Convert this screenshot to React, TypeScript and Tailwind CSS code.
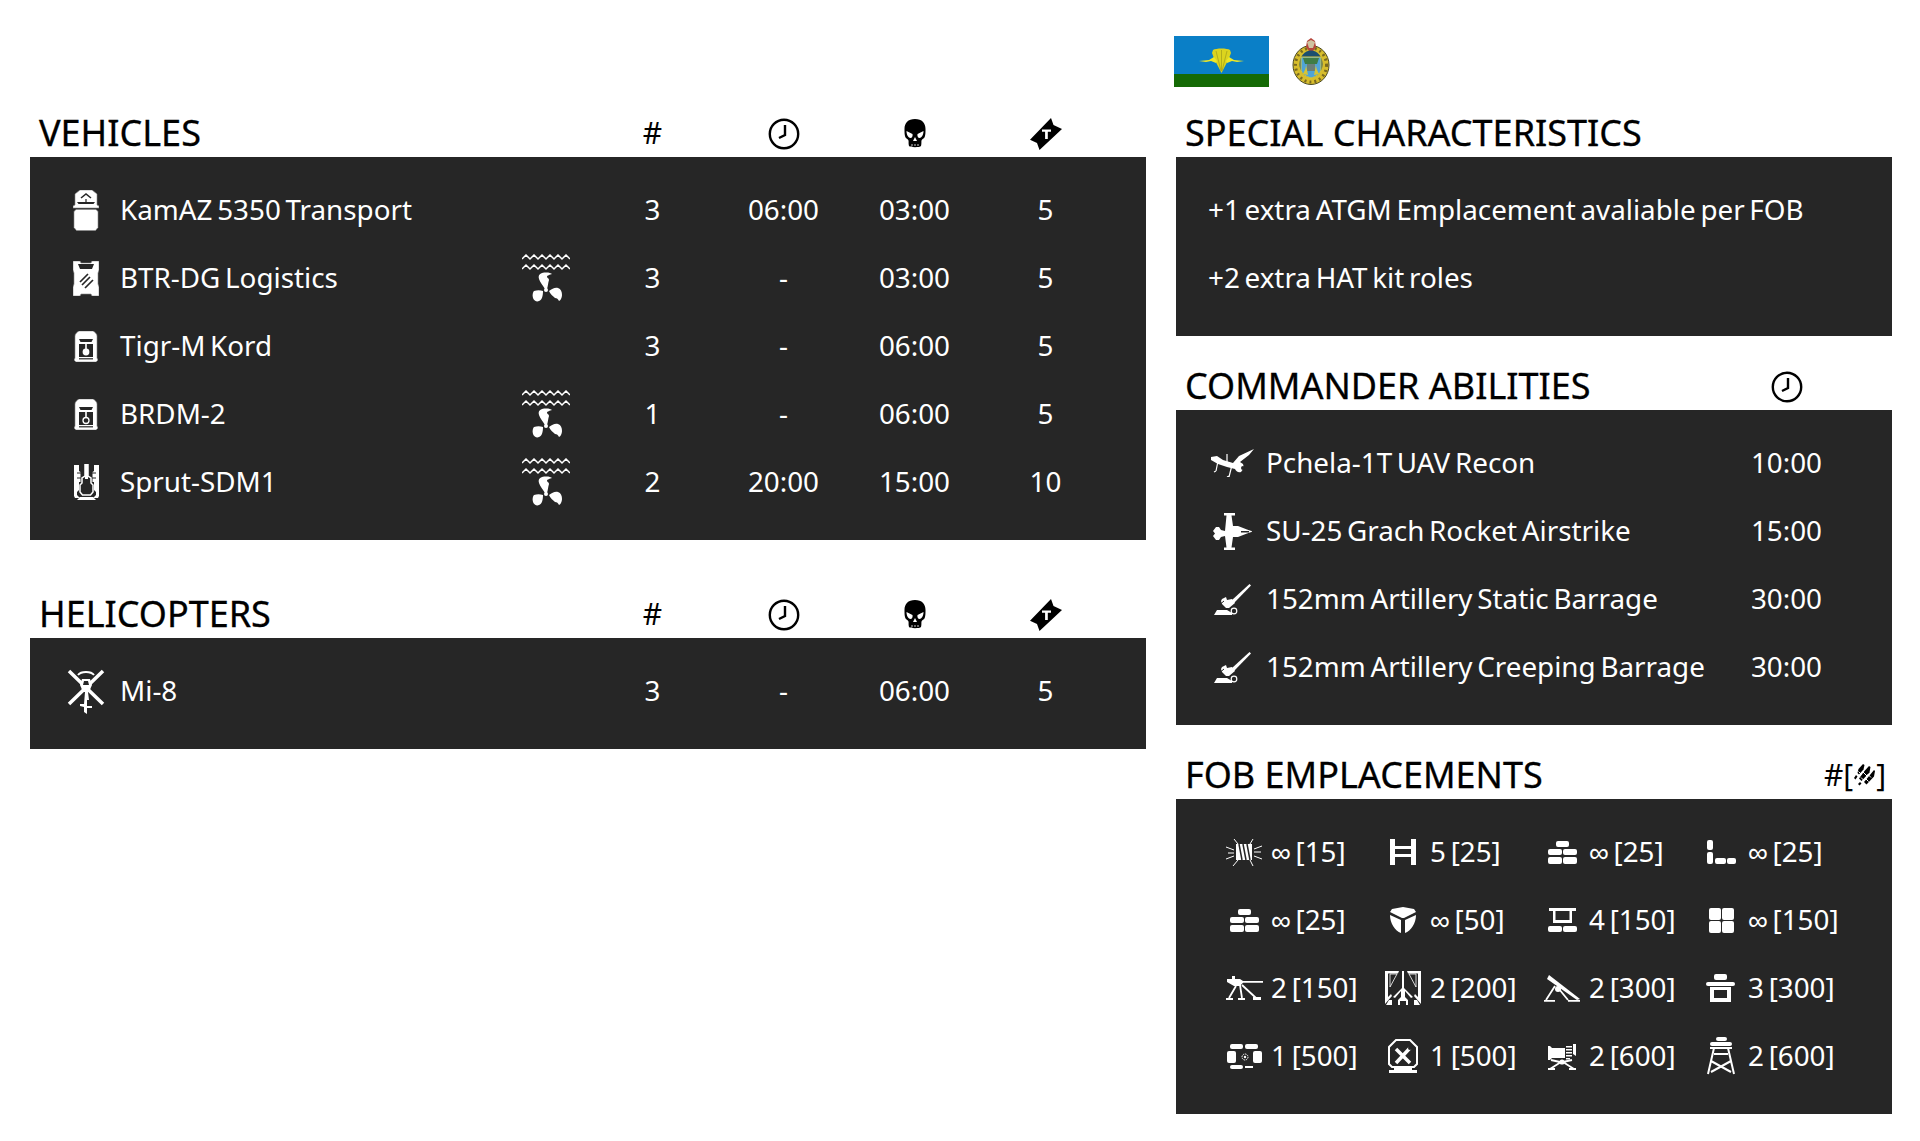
import React from "react";

const D = "#262626";

function Svg({ w, h, children, className = "" }: { w: number; h: number; children: React.ReactNode; className?: string }) {
  return (
    <svg width={w} height={h} viewBox={`0 0 ${w} ${h}`} className={`shrink-0 ${className}`} fill="#fff">
      {children}
    </svg>
  );
}

const Clock = () => (
  <Svg w={32} h={32}>
    <circle cx="16" cy="16" r="14.2" fill="none" stroke="#000" strokeWidth="2.4" />
    <path d="M17 7v10l-6 3" fill="none" stroke="#000" strokeWidth="2.4" />
  </Svg>
);
const Skull = () => (
  <Svg w={22} h={29}>
    <path d="M11 0C4 0 .5 4 .5 10c0 3 0 6 .8 8 .5 1.500 2.700 2 3.200 3.500.3 1-.2 3 .5 5.500 1 1.600 11 1.600 12 0 .7-2.500.2-4.500.5-5.500.5-1.500 2.700-2 3.200-3.500.8-2 .8-5 .8-8C21.500 4 18 0 11 0z" fill="#000" />
    <path d="M2.500 12l6 3c.5 2-.5 4-2 4-2 0-4-3-4-7zM19.500 12l-6 3c-.5 2 .5 4 2 4 2 0 4-3 4-7zM11 18l2 4h-4z" fill="#fff" />
    <path d="M8 25v2M11 25v2M14 25v2" stroke="#fff" strokeWidth=".8" />
  </Svg>
);
const Ticket = () => (
  <Svg w={32} h={32}>
    <path d="M21 0l2.500 7L32 11 9.500 32 7 25 0 21.700z" fill="#000" />
    <path d="M12 11.500h9v2.300h-3.200V21h-2.700v-7.200H12z" fill="#fff" />
  </Svg>
);

const Kamaz = () => (
  <Svg w={26} h={41}>
    <path d="M7 0h12l5 4v11l2 1v2H0v-2l2-1V4z" stroke="#888" strokeWidth=".6" />
    <path d="M8 8l5-4 5 4" fill="none" stroke={D} strokeWidth="1.600" />
    <path d="M4 12h18l-1.500 2h-15z" fill={D} />
    <path d="M13 9v5" stroke={D} strokeWidth="1.200" />
    <path d="M3 19.500h20l2 2v16l-2.500 3h-19L1 37.500v-16z" stroke="#888" strokeWidth=".6" />
  </Svg>
);
const Btr = () => (
  <Svg w={26} h={35}>
    <path d="M0 0h7l1 2h10l1-2h7v9l-1 3v11l1 3v9h-7l-1-2H8l-1 2H0v-9l1-3V12L0 9z" stroke="#888" strokeWidth=".6" />
    <path d="M5 3h16L19 8H7z" fill={D} />
    <path d="M7 21l8-8M9 24l8-8M12 27l8-8" stroke={D} strokeWidth="1.700" />
  </Svg>
);
const Tigr = ({ hollow }: { hollow?: boolean }) => (
  <Svg w={24} h={31}>
    <path d="M5 0h14c2 1 4 3 4 5v22l1 2-2 2H2l-2-2 1-2V5c0-2 2-4 4-5z" stroke="#888" strokeWidth=".6" />
    <path d="M5 8h14l-1.500 3h-11z" fill={D} />
    <path d="M5 13h14v13H5z" fill={D} />
    <path d="M11.200 12h1.600v6h-1.600z" />
    {hollow ? (
      <circle cx="12" cy="21.500" r="3" fill="none" stroke="#fff" strokeWidth="1.300" />
    ) : (
      <circle cx="12" cy="21" r="3.400" />
    )}
    <path d="M5 27.800h14" stroke={D} strokeWidth="1.200" />
  </Svg>
);
const Sprut = () => (
  <Svg w={25} h={36}>
    <path d="M0 1h5v6l1.500 1v10H5v8l-2 2v3l3 3H1l-1-2z" />
    <path d="M25 1h-5v6l-1.500 1v10H20v8l2 2v3l-3 3h5l1-2z" />
    <path d="M11 0h3v12l3 2v5l2 2v7l-2.500 3h-8L6 28v-7l2-2v-5l3-2z" fill="none" stroke="#fff" strokeWidth="1.500" />
    <path d="M11 0h3v15h-3z" />
    <path d="M3 9h5M17 9h5M3 14h4M18 14h4" stroke={D} strokeWidth="1" />
    <path d="M6 33h13l3 3H3z" />
  </Svg>
);
const Amphib = () => (
  <Svg w={48} h={48}>
    <path d="M0 5l4-4 4 4 4-4 4 4 4-4 4 4 4-4 4 4 4-4 4 4 4-4 4 4M0 15l4-4 4 4 4-4 4 4 4-4 4 4 4-4 4 4 4-4 4 4 4-4 4 4" fill="none" stroke="#fff" strokeWidth="1.500" />
    <path d="M23 35c-2-3-5-7-6-10-1-3 0-5 3-6 5-1 9 0 10 1-2 1-5 1-5 3 0 1 2 1 2 3-1 3-1 6-2 9z" />
    <path d="M21 37c-3-1-6-1-9 0-1 1-2 4-1 7 1 3 4 4 6 3 3-1 4-5 4-10z" />
    <path d="M27 37c3-2 6-4 9-3 3 1 4 4 4 7 0 3-2 6-3 6-1-2-2-3-4-3-2-2-5-4-6-7z" />
    <circle cx="24" cy="36" r="2" />
  </Svg>
);
const Heli = () => (
  <Svg w={38} h={46}>
    <path d="M2 3l34 33M36 3L2 36" stroke="#fff" strokeWidth="3.500" />
    <path d="M11 7c3-4 13-4 16 0" fill="none" stroke="#fff" strokeWidth="2" />
    <path d="M15 11h8l2 6-3 7h-6l-3-7z" fill="#fff" />
    <path d="M17 13h4l1 4h-6z" fill={D} />
    <path d="M18 24h3l1 8h-2v6h5v2h-5v6l-3-2v-5l-4-1v-2h4z" />
  </Svg>
);
const Uav = () => (
  <Svg w={43} h={28}>
    <path d="M0 8l6-1 6 4 10 3 6-7 15-7-5 6-9 7 3 2 1 4-3 4c-3 1-5-1-6-3l-8-2-9-3-7-4z" />
    <path d="M16 5v10M7 12l-2 10M21 16l-3 12M5 22l-2 1M18 27l-2 1" stroke="#fff" strokeWidth="1.200" />
    <circle cx="32" cy="19" r="2" fill={D} />
  </Svg>
);
const Su25 = () => (
  <Svg w={39} h={37}>
    <path d="M11 0h11v2.500h-3.500L20 13h5l9 3.500c3 1 5 1.500 5 2s-2 1-5 2L25 24h-5l-1.500 10.500H22V37H11v-2.500h2.500L12 23l-4 1-2 3H3l-3-4 2-2.500L0 18l3-4h3l2 3 4 1 1.500-15.500H11z" />
    <path d="M28 18h8v1.500h-8z" fill={D} />
  </Svg>
);
const Arty = () => (
  <Svg w={37} h={31}>
    <path d="M35.500 0L37 1.500 20 19l-2.500-2.500z" />
    <path d="M8 15l4-2 1 3 5-1 3 4-6 5h-3l-4-4-1-3zM0 31l3-5h10l5 3v2z" />
    <path d="M4 22l6-5" stroke={D} strokeWidth="1" />
    <circle cx="20" cy="27" r="2.800" fill={D} stroke="#fff" strokeWidth="1.200" />
  </Svg>
);

const Wire = () => (
  <Svg w={36} h={27}>
    <path d="M10 5h16v16H10z" />
    <path d="M13 5l3 16M17 5l3 16M21 5l3 16" stroke={D} strokeWidth="1.500" />
    <path d="M0 8l8 3M0 20l8-3M2 14h6M36 7l-8 3M36 20l-8-3M35 13h-7M8 0l4 5M27 0l-3 5M7 27l5-6M27 27l-3-6" stroke="#fff" strokeWidth="1" />
  </Svg>
);
const HIcon = () => (
  <Svg w={26} h={26}>
    <path d="M0 0h5v7h16V0h5v26h-5v-8H5v8H0zM5 10v5h16v-5z" fill="#fff" fillRule="evenodd" />
  </Svg>
);
const Bag = ({ x, y, w, h }: { x: number; y: number; w: number; h: number }) => <rect x={x} y={y} width={w} height={h} rx="2" />;
const Bricks = () => (
  <Svg w={29} h={23}>
    <Bag x={8} y={0} w={13} h={6} />
    <Bag x={0} y={8} w={14} h={6} />
    <Bag x={15} y={8} w={14} h={6} />
    <Bag x={0} y={16} w={14} h={7} />
    <Bag x={15} y={16} w={14} h={7} />
  </Svg>
);
const LWall = () => (
  <Svg w={29} h={24}>
    <Bag x={0} y={0} w={6} h={10} />
    <Bag x={0} y={12} w={6} h={12} />
    <Bag x={8} y={18} w={11} h={6} />
    <Bag x={20} y={18} w={9} h={6} />
  </Svg>
);
const Cube = () => (
  <Svg w={26} h={26}>
    <path d="M13 0l11 2 2 3-12 6h-2L0 5l2-3z" />
    <path d="M0 8l11 5v13C5 24 0 16 0 8zM26 8l-11 5v13c6-2 11-10 11-18z" />
  </Svg>
);
const Desk = () => (
  <Svg w={29} h={24}>
    <path d="M1 0h27v3H1zM5 3h2.500v9h14V3H24v12H5z" />
    <Bag x={0} y={18} w={14} h={6} />
    <Bag x={15} y={18} w={14} h={6} />
  </Svg>
);
const Quad = () => (
  <Svg w={25} h={25}>
    <Bag x={0} y={0} w={12} h={12} />
    <Bag x={13} y={0} w={12} h={12} />
    <Bag x={0} y={13} w={12} h={12} />
    <Bag x={13} y={13} w={12} h={12} />
  </Svg>
);
const Mg = () => (
  <Svg w={37} h={24}>
    <path d="M1 3h5V0h3v3h5l3 2h20v1.800H17L14 10H8L1 6z" />
    <path d="M10 10L3 22M14 9l2 13M16 9l14 13" stroke="#fff" strokeWidth="1.800" fill="none" />
    <path d="M0 22h7v2H0zM12 22h7v2h-7zM27 21h8v3h-8z" />
  </Svg>
);
const Tall = () => (
  <Svg w={36} h={34}>
    <path d="M0 0h14l-1 2.500H3V26l3-3 1 2-7 8zM36 0H22l1 2.500h10V26l-3-3-1 2 7 8z" />
    <path d="M17 0h2v17l9 9-2 1-6-7v6l3 3v5h-2v-4h-6v4h-2v-5l3-3v-6l-6 7-2-1 9-9z" />
    <path d="M1 34l3-5h3v5zM35 34l-3-5h-3v5z" />
    <path d="M5 3h7L5 16zM31 3h-7l7 13z" fill="none" stroke="#fff" strokeWidth=".8" />
  </Svg>
);
const Mortar = () => (
  <Svg w={36} h={27}>
    <path d="M5 0l31 24-3 1L3 4z" />
    <path d="M11 11L2 25M15 14l9 11" stroke="#fff" strokeWidth="1.800" />
    <path d="M0 25h11v1.800H0zM24 25h12v1.800H24z" />
    <circle cx="14" cy="14" r="3" />
  </Svg>
);
const Bunker = () => (
  <Svg w={30} h={28}>
    <Bag x={8} y={0} w={13} h={6} />
    <Bag x={0} y={8} w={29} h={4} />
    <path d="M4 13h21v15H4zM8 16v8h13v-8z" fillRule="evenodd" />
  </Svg>
);
const Armory = () => (
  <Svg w={35} h={25}>
    <Bag x={3} y={0} w={13} h={5} />
    <Bag x={18} y={0} w={13} h={5} />
    <Bag x={0} y={7} w={9} h={12} />
    <Bag x={26} y={7} w={9} h={12} />
    <Bag x={3} y={21} w={13} h={4} />
    <path d="M18 22h8v2h-8z" />
    <circle cx="18" cy="13" r="3" fill="none" stroke="#fff" strokeWidth="1" strokeDasharray="1.500 .8" />
    <circle cx="18" cy="13" r="1.200" />
  </Svg>
);
const Repair = () => (
  <Svg w={32} h={34}>
    <path d="M9 1h14l7 7v17l-3 3H5l-3-3V8z" fill="none" stroke="#fff" strokeWidth="2" />
    <path d="M2 31h28v3H2zM7 28h18v3H7z" />
    <path d="M9 10l14 14M23 9L9 24" stroke="#fff" strokeWidth="3.500" />
    <circle cx="23" cy="9" r="2" fill={D} />
  </Svg>
);
const Optic = () => (
  <Svg w={28} h={27}>
    <path d="M0 3h2l2 2h13v10H4l-2 2H0z" />
    <path d="M18 3h6v1.500h-6zM18 6h6v1.500h-6zM18 9h6v1.500h-6zM18 12h6v1.500h-6zM18 15h4v1.500h-4z" />
    <path d="M25 1h3v12l-3-2z" />
    <circle cx="14" cy="19" r="2.600" />
    <path d="M13 19L2 26M15 19l11 7M3 17l9 2M24 17l-9 2" stroke="#fff" strokeWidth="1.800" />
    <path d="M0 25h7v2H0zM21 25h7v2h-7z" />
  </Svg>
);
const Tower = () => (
  <Svg w={28} h={38}>
    <Bag x={9} y={0} w={11} h={4} />
    <Bag x={3} y={5} w={22} h={4} />
    <path d="M3 10h22v2H3z" />
    <path d="M7 11L1 37M21 11l6 26M7 17h14M4 24l20 11M24 24L4 35" stroke="#fff" strokeWidth="2" fill="none" />
  </Svg>
);
const Ammo = () => (
  <Svg w={23} h={24}>
    <g fill="#000">
      <path d="M10 1l1.500 1-1 4.500-4.500 5-1.500-1.500 1-4z" />
      <path d="M16 3l1.500 1-1 5.500-8 8.500-2.500-2.500 5.500-7.500z" />
      <path d="M21 7l1 1-1 5.500-7.500 8L11 19l5.500-6.500z" />
      <path d="M3 12l1.500 1.500-2 3-1.500-1.500zM7 19l1.500 1.500-2 2-1.500-1.500z" />
    </g>
    <path d="M5.500 8.500l3 3M10 9l4 4M14.500 11l3.500 3.500M8 14.500l2.500 2.500M13 16l2.500 2.500" stroke="#fff" strokeWidth="1" />
  </Svg>
);

const Flag = () => (
  <Svg w={95} h={51}>
    <rect width="95" height="38" fill="#0a7fc7" />
    <rect y="38" width="95" height="13" fill="#156a05" />
    <path d="M39 14c3-2 14-2 17 0l1 3c-2 6-6 13-9.500 20C44 30 40 23 38 17z" fill="#dcd41e" />
    <path d="M25 25l10-1 5-3 3 4-1 2-5-2-5 1zM70 25l-10-1-5-3-3 4 1 2 5-2 5 1z" fill="#efe826" />
    <path d="M42 15l5 20M47.500 14v21M53 15l-5 20" stroke="#a8a51a" strokeWidth=".8" fill="none" />
  </Svg>
);
const Emblem = () => (
  <Svg w={38} h={47}>
    <ellipse cx="19" cy="27" rx="18" ry="19.500" fill="#d7bd2c" stroke="#4c4a22" strokeWidth="1" />
    <ellipse cx="19" cy="27" rx="15.500" ry="17" fill="none" stroke="#7a6a20" strokeWidth="3" strokeDasharray="2 3" />
    <path d="M19 0l4 3 1 6-3 4h-4l-3-4 1-6z" fill="#b6463c" />
    <path d="M15 4l4-2 4 2-2 6h-4z" fill="#cfc4a0" />
    <ellipse cx="19" cy="26" rx="11.500" ry="13.500" fill="#1c4f6f" />
    <path d="M9 19h20v12c0 5-6 8-10 9-4-1-10-4-10-9z" fill="#4fa4d8" stroke="#dcc93a" strokeWidth="1" />
    <path d="M11 20h16l-2 6H13z" fill="#3f7d46" />
    <path d="M15 26h8v7h-8z" fill="#6b7f78" />
    <path d="M11 36c2-4 3-6 3-9l2 10zM27 36c-2-4-3-6-3-9l-2 10z" fill="#d8c534" />
  </Svg>
);

const Heading = ({ children }: { children: React.ReactNode }) => (
  <h2 className="pt-[4px] pb-[1px] text-[36px] leading-[47px] text-black whitespace-nowrap [-webkit-text-stroke:0.3px_#000]">{children}</h2>
);

const HeaderCols = () => (
  <>
    <div className="w-[131px] pt-[3px] flex justify-center items-center text-[30px] leading-[47px] text-black">#</div>
    <div className="w-[131px] pt-[5px] flex justify-center items-center"><Clock /></div>
    <div className="w-[131px] pt-[5px] flex justify-center items-center"><Skull /></div>
    <div className="w-[131px] pt-[5px] flex justify-center items-center"><Ticket /></div>
  </>
);

type V = { icon: React.ReactNode; name: string; amph?: boolean; n: string; t1: string; t2: string; c: string };
const vehicles: V[] = [
  { icon: <Kamaz />, name: "KamAZ 5350 Transport", n: "3", t1: "06:00", t2: "03:00", c: "5" },
  { icon: <Btr />, name: "BTR-DG Logistics", amph: true, n: "3", t1: "-", t2: "03:00", c: "5" },
  { icon: <Tigr />, name: "Tigr-M Kord", n: "3", t1: "-", t2: "06:00", c: "5" },
  { icon: <Tigr hollow />, name: "BRDM-2", amph: true, n: "1", t1: "-", t2: "06:00", c: "5" },
  { icon: <Sprut />, name: "Sprut-SDM1", amph: true, n: "2", t1: "20:00", t2: "15:00", c: "10" },
];

const VRow = ({ v }: { v: V }) => (
  <div className="flex h-[68px] pb-[2px] items-center leading-[66px]">
    <div className="w-[52px] mt-[2px] ml-[30px] mr-[8px] flex justify-center items-center">{v.icon}</div>
    <div className="w-[406px] whitespace-nowrap">{v.name}</div>
    <div className="w-[40px] mt-[2px] mr-[21px] flex justify-center items-center">{v.amph ? <Amphib /> : null}</div>
    <div className="w-[131px] text-center">{v.n}</div>
    <div className="w-[131px] text-center">{v.t1}</div>
    <div className="w-[131px] text-center">{v.t2}</div>
    <div className="w-[131px] text-center">{v.c}</div>
  </div>
);

const Panel = ({ children }: { children: React.ReactNode }) => (
  <div className="bg-[#262626] text-white text-[27.8px] [word-spacing:-2.5px] pt-[19px] pb-[24px]">{children}</div>
);

const TableHead = ({ title }: { title: string }) => (
  <div className="flex h-[52px] items-center pl-[9px]">
    <div className="w-[548px]"><Heading>{title}</Heading></div>
    <HeaderCols />
  </div>
);

const abilities: [React.ReactNode, string, string][] = [
  [<Uav />, "Pchela-1T UAV Recon", "10:00"],
  [<Su25 />, "SU-25 Grach Rocket Airstrike", "15:00"],
  [<Arty />, "152mm Artillery Static Barrage", "30:00"],
  [<Arty />, "152mm Artillery Creeping Barrage", "30:00"],
];

const fob: [React.ReactNode, string][] = [
  [<Wire />, "∞ [15]"],
  [<HIcon />, "5 [25]"],
  [<Bricks />, "∞ [25]"],
  [<LWall />, "∞ [25]"],
  [<Bricks />, "∞ [25]"],
  [<Cube />, "∞ [50]"],
  [<Desk />, "4 [150]"],
  [<Quad />, "∞ [150]"],
  [<Mg />, "2 [150]"],
  [<Tall />, "2 [200]"],
  [<Mortar />, "2 [300]"],
  [<Bunker />, "3 [300]"],
  [<Armory />, "1 [500]"],
  [<Repair />, "1 [500]"],
  [<Optic />, "2 [600]"],
  [<Tower />, "2 [600]"],
];

export default function App() {
  return (
    <div className="min-h-[1141px] bg-white flex pl-[30px] gap-[30px] font-['Noto_Sans',sans-serif]">
      <div className="w-[1116px] shrink-0 pt-[105px]">
        <TableHead title="VEHICLES" />
        <Panel>
          {vehicles.map((v) => (
            <VRow key={v.name} v={v} />
          ))}
        </Panel>
        <div className="mt-[46px]">
          <TableHead title="HELICOPTERS" />
        </div>
        <Panel>
          <div className="flex h-[68px] pb-[2px] items-center leading-[66px]">
            <div className="w-[52px] mt-[2px] ml-[30px] mr-[8px] flex justify-center items-center"><Heli /></div>
            <div className="w-[467px]">Mi-8</div>
            <div className="w-[131px] text-center">3</div>
            <div className="w-[131px] text-center">-</div>
            <div className="w-[131px] text-center">06:00</div>
            <div className="w-[131px] text-center">5</div>
          </div>
        </Panel>
      </div>

      <div className="w-[716px] shrink-0 pt-[36px]">
        <div className="flex items-center h-[51px] mb-[18px] -ml-[2px]">
          <Flag />
          <div className="ml-[23px]"><Emblem /></div>
        </div>
        <div className="pl-[9px]"><Heading>SPECIAL CHARACTERISTICS</Heading></div>
        <Panel>
          <div className="pl-[32px] pb-[2px] leading-[66px]">+1 extra ATGM Emplacement avaliable per FOB</div>
          <div className="pl-[32px] pb-[2px] leading-[66px]">+2 extra HAT kit roles</div>
        </Panel>

        <div className="mt-[22px] flex h-[52px] items-center pl-[9px]">
          <div className="w-[536px]"><Heading>COMMANDER ABILITIES</Heading></div>
          <div className="w-[131px] pt-[5px] flex justify-center"><Clock /></div>
        </div>
        <Panel>
          {abilities.map(([icon, name, t]) => (
            <div key={name} className="flex h-[68px] pb-[2px] items-center leading-[66px] pl-[31px]">
              <div className="w-[50px] mt-[2px] mr-[9px] flex justify-center items-center">{icon}</div>
              <div className="w-[455px] whitespace-nowrap">{name}</div>
              <div className="w-[131px] text-center">{t}</div>
            </div>
          ))}
        </Panel>

        <div className="mt-[22px] flex h-[52px] items-center justify-between pl-[9px]">
          <Heading>FOB EMPLACEMENTS</Heading>
          <div className="flex items-center pt-[3px] text-[30px] leading-[47px] text-black mr-[6px]">
            #[<Ammo />]
          </div>
        </div>
        <Panel>
          <div className="grid grid-cols-[159px_159px_159px_159px] pl-[46px]">
            {fob.map(([icon, label], i) => (
              <div key={i} className="flex h-[68px] pb-[2px] items-center leading-[66px]">
                <div className="w-[44px] mt-[2px] mr-[5px] flex justify-center items-center">{icon}</div>
                <div className="whitespace-nowrap">{label}</div>
              </div>
            ))}
          </div>
        </Panel>
      </div>
    </div>
  );
}
